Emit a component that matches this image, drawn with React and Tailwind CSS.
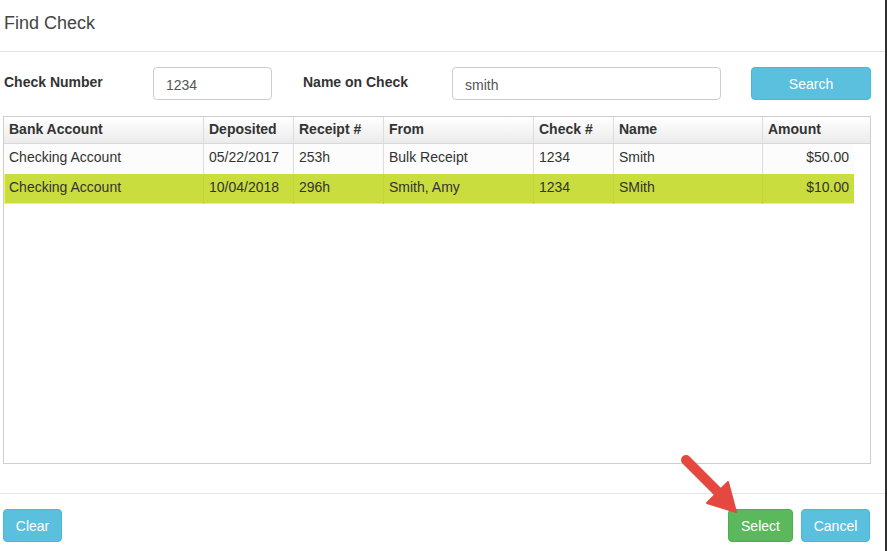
import React from "react";

const cols = [
  { key: "bank", label: "Bank Account", w: "w-[200px]" },
  { key: "dep", label: "Deposited", w: "w-[90px]" },
  { key: "rec", label: "Receipt #", w: "w-[90px]" },
  { key: "from", label: "From", w: "w-[150px]" },
  { key: "chk", label: "Check #", w: "w-[80px]" },
  { key: "name", label: "Name", w: "w-[149px]" },
];

const rows = [
  { bank: "Checking Account", dep: "05/22/2017", rec: "253h", from: "Bulk Receipt", chk: "1234", name: "Smith", amt: "$50.00", sel: false },
  { bank: "Checking Account", dep: "10/04/2018", rec: "296h", from: "Smith, Amy", chk: "1234", name: "SMith", amt: "$10.00", sel: true },
];

export default function App() {
  return (
    <div style={{ fontFamily: "'Liberation Sans', Arial, sans-serif" }} className="relative flex w-[887px] h-[551px] bg-white text-[14px] text-[#333]">
      <div className="w-[885px] flex flex-col">
        {/* Header */}
        <div className="h-[52px] border-b border-[#e5e5e5] pl-[4px] pt-[13px]">
          <h4 className="text-[18px] leading-[20px] text-[#444]">Find Check</h4>
        </div>

        {/* Search form */}
        <div className="flex items-center h-[33px] mt-[15px] pl-[4px]">
          <label className="w-[149px] font-bold -mt-[3px]">Check Number</label>
          <input
            defaultValue="1234"
            className="w-[119px] h-[33px] border border-[#ccc] rounded-[4px] px-[12px] pt-[2px] text-[#555] outline-none"
          />
          <label className="ml-[31px] w-[149px] font-bold -mt-[3px]">Name on Check</label>
          <input
            defaultValue="smith"
            className="w-[269px] h-[33px] border border-[#ccc] rounded-[4px] px-[12px] pt-[2px] text-[#555] outline-none"
          />
          <button className="ml-[30px] w-[120px] h-[33px] rounded-[4px] bg-[#5bc0de] border border-[#46b8da] text-white pt-[2px]">
            Search
          </button>
        </div>

        {/* Results table */}
        <div className="ml-[3px] mt-[16px] w-[868px] h-[348px] border border-[#cfcfcf] bg-white">
          <div className="flex h-[27px] border-b border-[#d8d8d8] bg-gradient-to-b from-white to-[#ebebeb] font-bold">
            {cols.map((c) => (
              <div key={c.key} className={`${c.w} border-r border-[#ddd] px-[5px] leading-[24px]`}>
                {c.label}
              </div>
            ))}
            <div className="flex-1 px-[5px] leading-[24px]">Amount</div>
          </div>
          {rows.map((r, i) => (
            <div
              key={i}
              className={`flex w-[850px] h-[30px] ${r.sel ? "bg-[#cadd3e] shadow-[inset_1px_-1px_0_#f2f55a]" : "bg-[#fcfcfc]"}`}
            >
              {cols.map((c) => (
                <div
                  key={c.key}
                  className={`${c.w} ${r.sel ? "border-r border-[#c3d43f]" : "border-r border-[#ddd]"} px-[5px] leading-[27px]`}
                >
                  {r[c.key]}
                </div>
              ))}
              <div className="flex-1 px-[5px] leading-[27px] text-right">{r.amt}</div>
            </div>
          ))}
        </div>

        {/* Footer */}
        <div className="mt-[29px] border-t border-[#e5e5e5] flex items-center pt-[15px] pl-[3px] pr-[15px]">
          <button className="w-[59px] h-[33px] rounded-[4px] bg-[#5bc0de] border border-[#46b8da] text-white pt-[2px]">
            Clear
          </button>
          <div className="flex-1" />
          <button className="w-[65px] h-[33px] rounded-[4px] bg-[#5cb85c] border border-[#4cae4c] text-white pt-[2px]">
            Select
          </button>
          <button className="ml-[8px] w-[69px] h-[33px] rounded-[4px] bg-[#5bc0de] border border-[#46b8da] text-white pt-[2px]">
            Cancel
          </button>
        </div>
      </div>
      <div className="w-[2px] bg-[#2f2f2f]" />

      {/* Annotation arrow */}
      <svg className="absolute left-[670px] top-[445px]" width="80" height="75" viewBox="0 0 80 75">
        <line x1="16" y1="15" x2="48" y2="47" stroke="#e5483f" strokeWidth="10" strokeLinecap="round" />
        <polygon points="66,67 37,58 58,37" fill="#e5483f" strokeLinejoin="round" stroke="#e5483f" strokeWidth="2" />
      </svg>
    </div>
  );
}
